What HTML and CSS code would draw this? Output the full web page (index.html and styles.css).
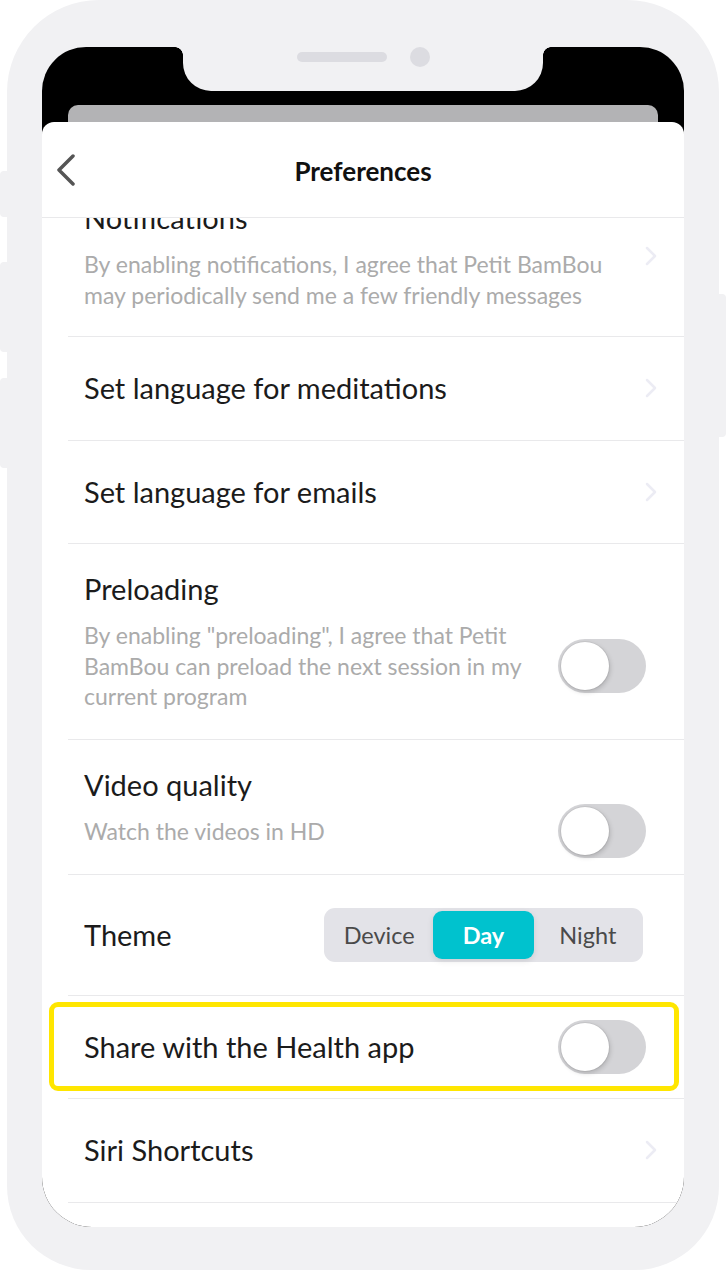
FILE: index.html
```html
<!DOCTYPE html>
<html lang="en">
<head>
<meta charset="UTF-8">
<meta name="viewport" content="width=device-width, initial-scale=1.0">
<title>Preferences</title>
<link rel="stylesheet" href="styles.css">
</head>
<body>
<div class="phone">
  <!-- botones laterales del marco -->
  <span class="side-btn left mute"></span>
  <span class="side-btn left vol-up"></span>
  <span class="side-btn left vol-down"></span>
  <span class="side-btn power"></span>

  <div class="screen">
    <div class="notch">
      <span class="speaker"></span>
      <span class="camera"></span>
    </div>

    <div class="sheet-back"></div>
    <div class="sheet">
      <header class="topbar">
        <a class="back" href="#">
          <svg width="20" height="32" viewBox="0 0 20 32"><polyline points="17,2 3,16 17,30" fill="none" stroke="#555" stroke-width="3.5" stroke-linecap="round" stroke-linejoin="round"/></svg>
        </a>
        <h1>Preferences</h1>
      </header>

      <div class="list">
        <div class="row row-sub first">
          <div>
            <div class="title">Notifications</div>
            <div class="subtitle">By enabling notifications, I agree that Petit BamBou<br>may periodically send me a few friendly messages</div>
          </div>
          <svg class="chevron" width="12" height="20" viewBox="0 0 12 20"><polyline points="2,2 10,10 2,18" fill="none" stroke="#ececf4" stroke-width="2.5" stroke-linecap="round" stroke-linejoin="round"/></svg>
        </div>

        <div class="row">
          <div class="title">Set language for meditations</div>
          <svg class="chevron" width="12" height="20" viewBox="0 0 12 20"><polyline points="2,2 10,10 2,18" fill="none" stroke="#ececf4" stroke-width="2.5" stroke-linecap="round" stroke-linejoin="round"/></svg>
        </div>

        <div class="row">
          <div class="title">Set language for emails</div>
          <svg class="chevron" width="12" height="20" viewBox="0 0 12 20"><polyline points="2,2 10,10 2,18" fill="none" stroke="#ececf4" stroke-width="2.5" stroke-linecap="round" stroke-linejoin="round"/></svg>
        </div>

        <div class="row row-stack">
          <div class="title">Preloading</div>
          <div class="sub-line">
            <div class="subtitle">By enabling "preloading", I agree that Petit<br>BamBou can preload the next session in my<br>current program</div>
            <div class="toggle"><span></span></div>
          </div>
        </div>

        <div class="row row-stack">
          <div class="title">Video quality</div>
          <div class="sub-line">
            <div class="subtitle">Watch the videos in HD</div>
            <div class="toggle"><span></span></div>
          </div>
        </div>

        <div class="row row-theme">
          <div class="title">Theme</div>
          <div class="segmented">
            <div class="seg">Device</div>
            <div class="seg active">Day</div>
            <div class="seg">Night</div>
          </div>
        </div>

        <div class="row">
          <div class="highlight"></div>
          <div class="title">Share with the Health app</div>
          <div class="toggle"><span></span></div>
        </div>

        <div class="row">
          <div class="title">Siri Shortcuts</div>
          <svg class="chevron" width="12" height="20" viewBox="0 0 12 20"><polyline points="2,2 10,10 2,18" fill="none" stroke="#ececf4" stroke-width="2.5" stroke-linecap="round" stroke-linejoin="round"/></svg>
        </div>
      </div>
    </div>
  </div>
</div>
</body>
</html>
```

FILE: styles.css
```css
/* marco del telefono */
body {
  margin: 0;
  background: #fff;
  font-family: Lato, "Noto Sans", sans-serif;
}

.phone {
  position: relative;
  margin: 0 7px;
  height: 1270px;
  box-sizing: border-box;
  padding: 47px 35px 43px;
  background: #f1f1f3;
  border-radius: 92px 92px 84px 84px;
}

.side-btn {
  position: absolute;
  width: 12px;
  background: #f1f1f3;
  border-radius: 4px;
}

.side-btn.left {
  left: -7px;
}

.mute {
  top: 171px;
  height: 46px;
}

.vol-up {
  top: 262px;
  height: 90px;
}

.vol-down {
  top: 378px;
  height: 90px;
}

.power {
  right: -7px;
  top: 294px;
  height: 143px;
}

.screen {
  position: relative;
  height: 100%;
  box-sizing: border-box;
  padding-top: 58px;
  background: #000;
  border-radius: 44px 44px 50px 50px;
  overflow: hidden;
  display: flex;
  flex-direction: column;
}

.notch {
  position: absolute;
  top: 0;
  left: 141px;
  width: 360px;
  height: 44px;
  box-sizing: border-box;
  padding-bottom: 24px;
  background: #f1f1f3;
  border-radius: 0 0 28px 28px;
  display: flex;
  justify-content: center;
  align-items: center;
  gap: 23px;
  z-index: 2;
}

.notch::before,
.notch::after {
  content: "";
  position: absolute;
  top: 0;
  width: 8px;
  height: 8px;
}

.notch::before {
  left: -8px;
  background: radial-gradient(circle at 0 100%, transparent 7.5px, #f1f1f3 8px);
}

.notch::after {
  right: -8px;
  background: radial-gradient(circle at 100% 100%, transparent 7.5px, #f1f1f3 8px);
}

.speaker {
  width: 90px;
  height: 10px;
  border-radius: 5px;
  background: #dcdce1;
}

.camera {
  width: 20px;
  height: 20px;
  border-radius: 50%;
  background: #dcdce1;
}

/* hojas de la vista modal */
.sheet-back {
  flex-shrink: 0;
  height: 30px;
  margin: 0 26px;
  background: #b3b3b5;
  border-radius: 10px 10px 0 0;
}

.sheet {
  flex: 1;
  margin-top: -13px;
  background: #fff;
  border-radius: 12px 12px 0 0;
  display: flex;
  flex-direction: column;
  overflow: hidden;
}

.topbar {
  flex-shrink: 0;
  height: 96px;
  box-sizing: border-box;
  padding: 3px 14px 0;
  border-bottom: 1px solid #e9e9eb;
  display: grid;
  grid-template-columns: 1fr auto 1fr;
  align-items: center;
}

.back {
  display: flex;
  align-items: center;
  margin-top: -3px;
}

.topbar h1 {
  margin: 0;
  font-size: 26px;
  font-weight: 700;
  color: #111;
}

/* lista de opciones */
.list {
  flex: 1;
  overflow: hidden;
}

.row {
  position: relative;
  margin-left: 26px;
  min-height: 103.5px;
  box-sizing: border-box;
  padding: 0 38px 0 16px;
  border-bottom: 1px solid #e9e9eb;
  display: flex;
  align-items: center;
  justify-content: space-between;
}

.row-sub {
  padding-top: 30px;
  padding-bottom: 26px;
}

.row.first {
  margin-top: -46px;
}

.row-stack {
  display: block;
  min-height: 0;
  padding-top: 29px;
  padding-bottom: 27.5px;
}

.row-theme {
  min-height: 120.5px;
}

.title {
  font-size: 29px;
  line-height: 32px;
  color: #1b1b1b;
}

.subtitle {
  margin-top: 15px;
  font-size: 23px;
  line-height: 30.5px;
  color: #ababab;
}

.sub-line {
  margin-top: 15px;
  display: flex;
  align-items: center;
  justify-content: space-between;
}

.sub-line .subtitle {
  margin-top: 0;
}

.sub-line .toggle {
  margin: -12px 0;
}

.chevron {
  flex-shrink: 0;
  margin-right: -11px;
}

.toggle {
  flex-shrink: 0;
  width: 88px;
  height: 54px;
  box-sizing: border-box;
  padding: 3px;
  border-radius: 27px;
  background: #d4d4d7;
}

.toggle span {
  display: block;
  width: 48px;
  height: 48px;
  border-radius: 50%;
  background: #fff;
  box-shadow: 0 0 0 1px rgba(0, 0, 0, 0.05), 1px 2px 5px rgba(0, 0, 0, 0.18);
}

.segmented {
  width: 319px;
  height: 54px;
  box-sizing: border-box;
  margin-right: 3px;
  padding: 3px;
  background: #e3e3e8;
  border-radius: 11px;
  display: grid;
  grid-template-columns: repeat(3, 1fr);
}

.seg {
  display: flex;
  align-items: center;
  justify-content: center;
  font-size: 23.5px;
  color: #4a4a4a;
  border-radius: 9px;
}

.seg.active {
  margin: 0 2px;
  background: #00c2ce;
  color: #fff;
  font-weight: 700;
  box-shadow: 0 2px 6px rgba(0, 0, 0, 0.1);
}

/* recuadro amarillo de la opcion destacada */
.highlight {
  position: absolute;
  left: -19px;
  right: 5px;
  top: 6px;
  bottom: 7px;
  border: 5px solid #ffe600;
  border-radius: 9px;
  pointer-events: none;
}
```
